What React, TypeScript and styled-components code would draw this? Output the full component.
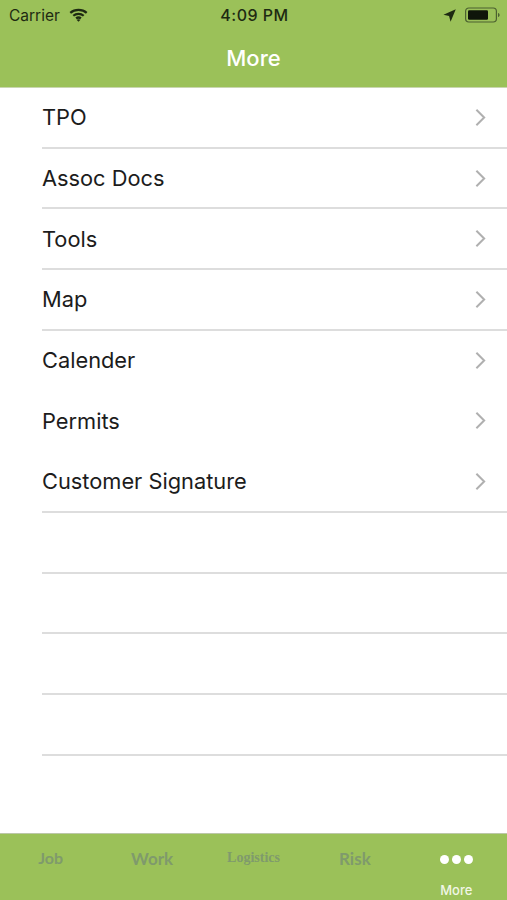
import React from "react";
import styled, { createGlobalStyle } from "styled-components";

const GlobalStyle = createGlobalStyle`
  html, body {
    margin: 0;
    padding: 0;
    background: #fff;
  }
  * {
    box-sizing: border-box;
  }
`;

const Screen = styled.div`
  width: 507px;
  height: 900px;
  display: flex;
  flex-direction: column;
  overflow: hidden;
  background: #fff;
  font-family: "Inter", "Liberation Sans", sans-serif;
`;

const Header = styled.header`
  height: 88px;
  flex: none;
  display: flex;
  flex-direction: column;
  background: #9bc159;
  border-bottom: 1px solid #c9d6b0;
`;

const StatusBar = styled.div`
  height: 30px;
  display: grid;
  grid-template-columns: 1fr auto 1fr;
  align-items: center;
  padding: 0 7px 0 9px;
  color: #1e2a12;
  font-size: 15.5px;
`;

const StatusLeft = styled.div`
  display: flex;
  align-items: center;
  gap: 9px;
`;

const StatusRight = styled.div`
  display: flex;
  align-items: center;
  justify-content: flex-end;
  gap: 9px;
`;

const Clock = styled.div`
  font-size: 16px;
  font-weight: 500;
  letter-spacing: 0.5px;
`;

const NavTitle = styled.div`
  flex: 1;
  display: flex;
  align-items: center;
  justify-content: center;
  padding-bottom: 2px;
  color: #fff;
  font-size: 22px;
  font-weight: 500;
`;

const List = styled.main`
  flex: 1;
`;

const Row = styled.div<{ $line: boolean }>`
  height: 60.7px;
  margin-left: 42px;
  padding-right: 21px;
  display: flex;
  align-items: center;
  justify-content: space-between;
  border-bottom: ${({ $line }) => ($line ? "2px solid #dddddd" : "2px solid transparent")};
  color: #1c1c1c;
  font-size: 21.8px;
`;

const TabBar = styled.nav`
  height: 67px;
  flex: none;
  display: grid;
  grid-template-columns: repeat(5, 1fr);
  background: #9bc159;
  border-top: 1px solid #bcc7a8;
`;

const Tab = styled.div`
  display: flex;
  flex-direction: column;
  align-items: center;
`;

const TabImageLabel = styled.div<{ $size: number; $top: number; $serif?: boolean }>`
  margin-top: ${({ $top }) => $top}px;
  color: #7f9a6c;
  font-family: ${({ $serif }) => ($serif ? '"Liberation Serif", serif' : '"Lato", sans-serif')};
  font-size: ${({ $size }) => $size}px;
  font-weight: 700;
  line-height: 20px;
`;

const Dots = styled.div`
  margin-top: 21px;
  display: flex;
  gap: 3px;
`;

const Dot = styled.span`
  width: 9px;
  height: 9px;
  border-radius: 50%;
  background: #fff;
`;

const TabLabel = styled.div`
  margin-top: 18px;
  color: #f1f6e6;
  font-size: 13px;
  line-height: 16px;
  font-weight: 500;
`;

const Wifi = () => (
  <svg width="19" height="14" viewBox="0 0 20 15" fill="none" stroke="#1e2a12" strokeWidth="2.4">
    <path d="M1.2 5.2C6 1 14 1 18.8 5.2" />
    <path d="M4.4 8.3C7.5 5.7 12.5 5.7 15.6 8.3" />
    <path d="M7.4 11.2C8.9 10 11.1 10 12.6 11.2" />
    <path d="M10 14.8L7.9 12.6C9 11.7 11 11.7 12.1 12.6Z" fill="#1e2a12" stroke="none" />
  </svg>
);

const LocationArrow = () => (
  <svg width="13" height="13" viewBox="0 0 12 12">
    <path d="M11.8 0.2L0.4 5.2L5.6 6.4L7 11.8Z" fill="#1e2a12" />
  </svg>
);

const Battery = () => (
  <svg width="35" height="16" viewBox="0 0 35 16">
    <rect x="0.6" y="1" width="30.8" height="14" rx="3.2" fill="none" stroke="#4c6130" strokeWidth="1.2" />
    <rect x="3" y="3.2" width="20" height="9.6" rx="1.2" fill="#0f150a" />
    <path d="M33 6v4c1-.2 1.6-1 1.6-2s-.6-1.8-1.6-2Z" fill="#4c6130" />
  </svg>
);

const Chevron = () => (
  <svg width="11" height="19" viewBox="0 0 12 20" fill="none" stroke="#b0b0b0" strokeWidth="2.2">
    <path d="M1.5 1.5L10 10L1.5 18.5" />
  </svg>
);

const items = [
  { label: "TPO", line: true },
  { label: "Assoc Docs", line: true },
  { label: "Tools", line: true },
  { label: "Map", line: true },
  { label: "Calender", line: false },
  { label: "Permits", line: false },
  { label: "Customer Signature", line: true },
];

const App = () => {
  return (
    <Screen>
      <GlobalStyle />
      <Header>
        <StatusBar>
          <StatusLeft>
            <span>Carrier</span>
            <Wifi />
          </StatusLeft>
          <Clock>4:09 PM</Clock>
          <StatusRight>
            <LocationArrow />
            <Battery />
          </StatusRight>
        </StatusBar>
        <NavTitle>More</NavTitle>
      </Header>
      <List>
        {items.map((item) => (
          <Row key={item.label} $line={item.line}>
            <span>{item.label}</span>
            <Chevron />
          </Row>
        ))}
        {[0, 1, 2, 3].map((i) => (
          <Row key={i} $line />
        ))}
      </List>
      <TabBar>
        <Tab>
          <TabImageLabel $size={16} $top={14}>Job</TabImageLabel>
        </Tab>
        <Tab>
          <TabImageLabel $size={17} $top={15}>Work</TabImageLabel>
        </Tab>
        <Tab>
          <TabImageLabel $size={14} $top={14} $serif>Logistics</TabImageLabel>
        </Tab>
        <Tab>
          <TabImageLabel $size={17} $top={15}>Risk</TabImageLabel>
        </Tab>
        <Tab>
          <Dots>
            <Dot />
            <Dot />
            <Dot />
          </Dots>
          <TabLabel>More</TabLabel>
        </Tab>
      </TabBar>
    </Screen>
  );
};

export default App;
